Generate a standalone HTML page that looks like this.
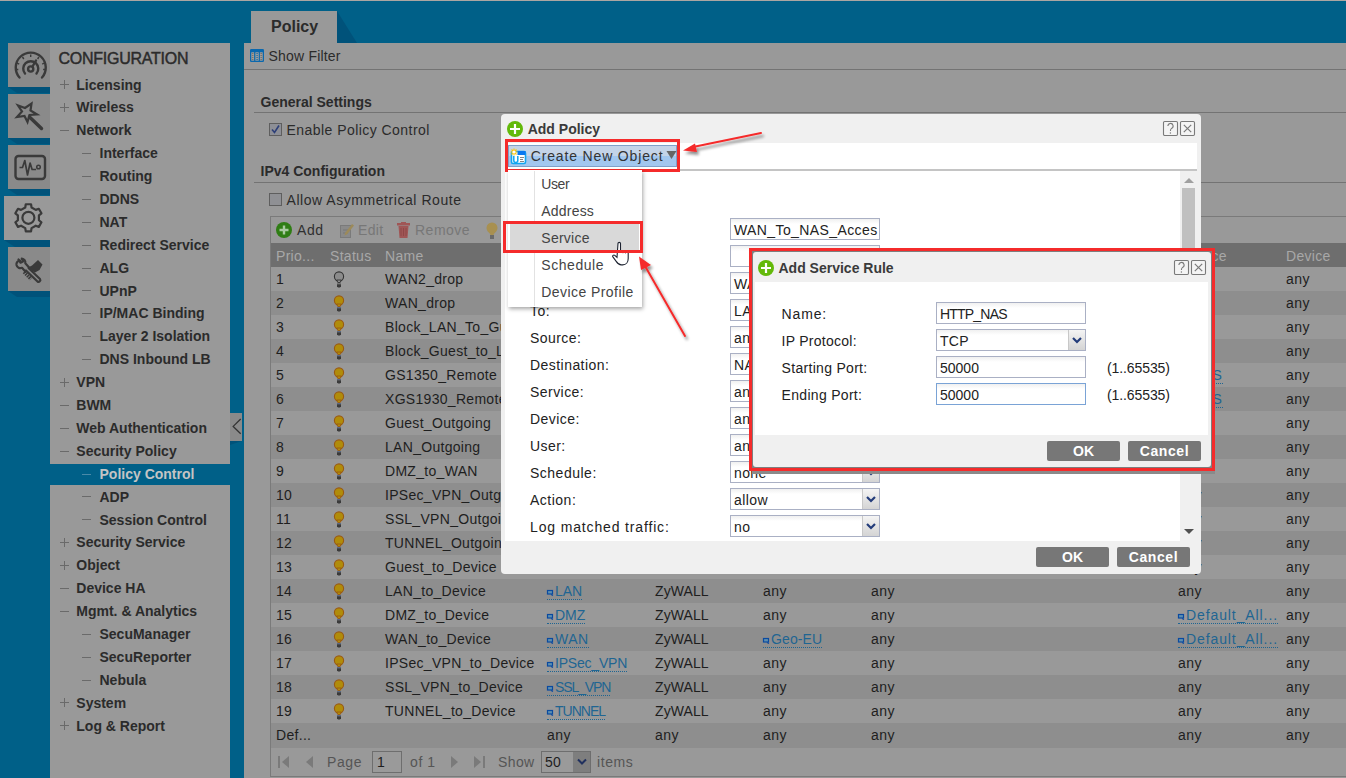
<!DOCTYPE html><html><head><meta charset="utf-8"><style>
*{box-sizing:border-box}
html,body{margin:0;padding:0}
body{width:1346px;height:778px;overflow:hidden;position:relative;background:#006088;font-family:"Liberation Sans",sans-serif;}
.t{position:absolute;white-space:nowrap;line-height:1;}
.r{position:absolute;}
svg{position:absolute;overflow:visible}
</style></head><body>
<div class="r" style="left:0px;top:0px;width:1346px;height:1px;background:#aca6a2;"></div>
<svg style="left:0;top:0" width="1346" height="60"><polygon points="337,11 357,43 337,43" fill="#00527a"/></svg>
<div class="r" style="left:251px;top:11px;width:86px;height:32px;background:#999999;"></div>
<div class="t" style="left:271.0px;top:19.0px;font-size:16px;font-weight:700;color:#2b2b2b;">Policy</div>
<div class="r" style="left:8px;top:43px;width:42px;height:44px;background:#8a8a8a;"></div>
<svg style="left:0;top:0" width="60" height="300"><polygon points="8,87 50,87 50,93 17,93" fill="#00527a"/></svg>
<div class="r" style="left:8px;top:94px;width:42px;height:44px;background:#8a8a8a;"></div>
<svg style="left:0;top:0" width="60" height="300"><polygon points="8,138 50,138 50,144 17,144" fill="#00527a"/></svg>
<div class="r" style="left:8px;top:145px;width:42px;height:44px;background:#8a8a8a;"></div>
<svg style="left:0;top:0" width="60" height="300"><polygon points="8,189 50,189 50,195 17,195" fill="#00527a"/></svg>
<div class="r" style="left:4px;top:196px;width:46px;height:44px;background:#999999;"></div>
<svg style="left:0;top:0" width="60" height="300"><polygon points="4,240 50,240 50,247 15,247" fill="#00527a"/></svg>
<div class="r" style="left:8px;top:247px;width:42px;height:44px;background:#8a8a8a;"></div>
<svg style="left:0;top:0" width="60" height="300"><polygon points="8,291 50,291 50,297 17,297" fill="#00527a"/></svg>
<svg style="left:0;top:0" width="60" height="300"><g fill="none" stroke="#3a3a3a" stroke-width="2.4" stroke-linecap="round"><path d="M19.5 77.5A15 15 0 1 1 42 77.5"/><path d="M25 73.5A7.5 7.5 0 1 1 36.5 73.5"/><circle cx="30.7" cy="69" r="2.6"/><path d="M32.5 66.5L36 60.5"/></g><g stroke="#3a3a3a" stroke-width="1.4"><path d="M30.7 54.5v2.5M22.5 57l1.3 2M38.9 57l-1.3 2M17 63l2.2 1.2M44.4 63l-2.2 1.2M15.8 69.5h2.5M45.6 69.5h-2.5"/></g></svg>
<svg style="left:0;top:0" width="60" height="300"><g fill="none" stroke="#3a3a3a" stroke-width="2.2" stroke-linejoin="miter"><path d="M31.5 103.5L30.5 110.5L37 114.5L29.5 115L27.5 122L24.5 116L17 117L22 111.5L18 105.5L25 108z"/></g><path d="M29.5 117L41.5 128.5" stroke="#3a3a3a" stroke-width="3.4" stroke-linecap="round"/></svg>
<svg style="left:0;top:0" width="60" height="300"><rect x="15.5" y="156" width="29.5" height="23" rx="3" fill="none" stroke="#3a3a3a" stroke-width="2.4"/><path d="M19.5 167.5h3l2.3-7 2.7 14.5 2.6-12 2 6.5h4" fill="none" stroke="#3a3a3a" stroke-width="1.7" stroke-linejoin="round"/><circle cx="38.5" cy="167" r="1.8" fill="none" stroke="#3a3a3a" stroke-width="1.5"/></svg>
<svg style="left:0;top:0" width="60" height="300"><polygon points="25.24,207.47 25.77,204.25 31.03,204.25 31.56,207.47 35.77,209.90 38.81,208.75 41.45,213.31 38.92,215.37 38.92,220.23 41.45,222.29 38.81,226.85 35.77,225.70 31.56,228.13 31.03,231.35 25.77,231.35 25.24,228.13 21.03,225.70 17.99,226.85 15.35,222.29 17.88,220.23 17.88,215.37 15.35,213.31 17.99,208.75 21.03,209.90" fill="none" stroke="#3a3a3a" stroke-width="2.2" stroke-linejoin="round"/><circle cx="28.4" cy="217.8" r="6" fill="none" stroke="#3a3a3a" stroke-width="2.2"/></svg>
<svg style="left:0;top:0" width="60" height="300"><g fill="none" stroke="#3a3a3a" stroke-width="2.2" stroke-linecap="round" stroke-linejoin="round"><path d="M20 260.5a3.8 3.8 0 0 0-3.5 4.5 4 4 0 0 0 5.5 2.8l3.5 4M18.5 259.5l2 3.2 2.5-1.2-1.2-3a4 4 0 0 1 3.5 4.8l4 4.5"/><path d="M29 268.5l11 10.5a1.8 1.8 0 0 1-2.5 2.5l-11.5-11"/></g><path d="M27 268l5-2.5 6-5.5 4.5 4.5-3 5.5-4.5 2.5z" fill="#3a3a3a"/><path d="M24 272l7 7" stroke="#3a3a3a" stroke-width="3.5" stroke-dasharray="1.6 0.8"/></svg>
<div class="r" style="left:50px;top:43px;width:180px;height:735px;background:#999999;"></div>
<div class="t" style="left:58.5px;top:50.8px;font-size:16px;color:#2b2b2b;letter-spacing:-0.25px;-webkit-text-stroke:0.45px #2b2b2b;">CONFIGURATION</div>
<div class="t" style="left:76.3px;top:77.5px;font-size:14px;font-weight:700;color:#2b2b2b;">Licensing</div>
<div class="r" style="left:60px;top:84px;width:9px;height:1px;background:#6a6a6a;"></div>
<div class="r" style="left:64px;top:80px;width:1px;height:9px;background:#6a6a6a;"></div>
<div class="t" style="left:76.3px;top:100.4px;font-size:14px;font-weight:700;color:#2b2b2b;">Wireless</div>
<div class="r" style="left:60px;top:107px;width:9px;height:1px;background:#6a6a6a;"></div>
<div class="r" style="left:64px;top:103px;width:1px;height:9px;background:#6a6a6a;"></div>
<div class="t" style="left:76.3px;top:123.3px;font-size:14px;font-weight:700;color:#2b2b2b;">Network</div>
<div class="r" style="left:60px;top:130px;width:9px;height:1px;background:#6a6a6a;"></div>
<div class="t" style="left:99.5px;top:146.2px;font-size:14px;font-weight:700;color:#2b2b2b;">Interface</div>
<div class="r" style="left:82px;top:153px;width:9px;height:1px;background:#6a6a6a;"></div>
<div class="t" style="left:99.5px;top:169.1px;font-size:14px;font-weight:700;color:#2b2b2b;">Routing</div>
<div class="r" style="left:82px;top:176px;width:9px;height:1px;background:#6a6a6a;"></div>
<div class="t" style="left:99.5px;top:192.0px;font-size:14px;font-weight:700;color:#2b2b2b;">DDNS</div>
<div class="r" style="left:82px;top:199px;width:9px;height:1px;background:#6a6a6a;"></div>
<div class="t" style="left:99.5px;top:214.9px;font-size:14px;font-weight:700;color:#2b2b2b;">NAT</div>
<div class="r" style="left:82px;top:222px;width:9px;height:1px;background:#6a6a6a;"></div>
<div class="t" style="left:99.5px;top:237.8px;font-size:14px;font-weight:700;color:#2b2b2b;">Redirect Service</div>
<div class="r" style="left:82px;top:245px;width:9px;height:1px;background:#6a6a6a;"></div>
<div class="t" style="left:99.5px;top:260.7px;font-size:14px;font-weight:700;color:#2b2b2b;">ALG</div>
<div class="r" style="left:82px;top:268px;width:9px;height:1px;background:#6a6a6a;"></div>
<div class="t" style="left:99.5px;top:283.6px;font-size:14px;font-weight:700;color:#2b2b2b;">UPnP</div>
<div class="r" style="left:82px;top:290px;width:9px;height:1px;background:#6a6a6a;"></div>
<div class="t" style="left:99.5px;top:306.4px;font-size:14px;font-weight:700;color:#2b2b2b;">IP/MAC Binding</div>
<div class="r" style="left:82px;top:313px;width:9px;height:1px;background:#6a6a6a;"></div>
<div class="t" style="left:99.5px;top:329.3px;font-size:14px;font-weight:700;color:#2b2b2b;">Layer 2 Isolation</div>
<div class="r" style="left:82px;top:336px;width:9px;height:1px;background:#6a6a6a;"></div>
<div class="t" style="left:99.5px;top:352.2px;font-size:14px;font-weight:700;color:#2b2b2b;">DNS Inbound LB</div>
<div class="r" style="left:82px;top:359px;width:9px;height:1px;background:#6a6a6a;"></div>
<div class="t" style="left:76.3px;top:375.1px;font-size:14px;font-weight:700;color:#2b2b2b;">VPN</div>
<div class="r" style="left:60px;top:382px;width:9px;height:1px;background:#6a6a6a;"></div>
<div class="r" style="left:64px;top:378px;width:1px;height:9px;background:#6a6a6a;"></div>
<div class="t" style="left:76.3px;top:398.0px;font-size:14px;font-weight:700;color:#2b2b2b;">BWM</div>
<div class="r" style="left:60px;top:405px;width:9px;height:1px;background:#6a6a6a;"></div>
<div class="t" style="left:76.3px;top:420.9px;font-size:14px;font-weight:700;color:#2b2b2b;">Web Authentication</div>
<div class="r" style="left:60px;top:428px;width:9px;height:1px;background:#6a6a6a;"></div>
<div class="t" style="left:76.3px;top:443.8px;font-size:14px;font-weight:700;color:#2b2b2b;">Security Policy</div>
<div class="r" style="left:60px;top:451px;width:9px;height:1px;background:#6a6a6a;"></div>
<div class="r" style="left:50px;top:464px;width:180px;height:21px;background:#006088;"></div>
<div class="t" style="left:99.5px;top:466.7px;font-size:14px;font-weight:700;color:#c4c4c4;">Policy Control</div>
<div class="r" style="left:82px;top:474px;width:9px;height:1px;background:#4a8aa8;"></div>
<div class="t" style="left:99.5px;top:489.6px;font-size:14px;font-weight:700;color:#2b2b2b;">ADP</div>
<div class="r" style="left:82px;top:496px;width:9px;height:1px;background:#6a6a6a;"></div>
<div class="t" style="left:99.5px;top:512.5px;font-size:14px;font-weight:700;color:#2b2b2b;">Session Control</div>
<div class="r" style="left:82px;top:519px;width:9px;height:1px;background:#6a6a6a;"></div>
<div class="t" style="left:76.3px;top:535.3px;font-size:14px;font-weight:700;color:#2b2b2b;">Security Service</div>
<div class="r" style="left:60px;top:542px;width:9px;height:1px;background:#6a6a6a;"></div>
<div class="r" style="left:64px;top:538px;width:1px;height:9px;background:#6a6a6a;"></div>
<div class="t" style="left:76.3px;top:558.2px;font-size:14px;font-weight:700;color:#2b2b2b;">Object</div>
<div class="r" style="left:60px;top:565px;width:9px;height:1px;background:#6a6a6a;"></div>
<div class="r" style="left:64px;top:561px;width:1px;height:9px;background:#6a6a6a;"></div>
<div class="t" style="left:76.3px;top:581.1px;font-size:14px;font-weight:700;color:#2b2b2b;">Device HA</div>
<div class="r" style="left:60px;top:588px;width:9px;height:1px;background:#6a6a6a;"></div>
<div class="t" style="left:76.3px;top:604.0px;font-size:14px;font-weight:700;color:#2b2b2b;">Mgmt. &amp; Analytics</div>
<div class="r" style="left:60px;top:611px;width:9px;height:1px;background:#6a6a6a;"></div>
<div class="t" style="left:99.5px;top:626.9px;font-size:14px;font-weight:700;color:#2b2b2b;">SecuManager</div>
<div class="r" style="left:82px;top:634px;width:9px;height:1px;background:#6a6a6a;"></div>
<div class="t" style="left:99.5px;top:649.8px;font-size:14px;font-weight:700;color:#2b2b2b;">SecuReporter</div>
<div class="r" style="left:82px;top:657px;width:9px;height:1px;background:#6a6a6a;"></div>
<div class="t" style="left:99.5px;top:672.7px;font-size:14px;font-weight:700;color:#2b2b2b;">Nebula</div>
<div class="r" style="left:82px;top:680px;width:9px;height:1px;background:#6a6a6a;"></div>
<div class="t" style="left:76.3px;top:695.6px;font-size:14px;font-weight:700;color:#2b2b2b;">System</div>
<div class="r" style="left:60px;top:702px;width:9px;height:1px;background:#6a6a6a;"></div>
<div class="r" style="left:64px;top:698px;width:1px;height:9px;background:#6a6a6a;"></div>
<div class="t" style="left:76.3px;top:718.5px;font-size:14px;font-weight:700;color:#2b2b2b;">Log &amp; Report</div>
<div class="r" style="left:60px;top:725px;width:9px;height:1px;background:#6a6a6a;"></div>
<div class="r" style="left:64px;top:721px;width:1px;height:9px;background:#6a6a6a;"></div>
<div class="r" style="left:230px;top:413px;width:12px;height:28px;background:#8a8a8a;"></div>
<svg style="left:0;top:0" width="260" height="460"><polygon points="230,441 242,441 230,445" fill="#00527a"/><polyline points="240.7,419 233.2,426.4 240.7,433.7" fill="none" stroke="#333" stroke-width="1.3"/></svg>
<div class="r" style="left:244px;top:43px;width:1102px;height:735px;background:#999999;"></div>
<svg style="left:250px;top:49px" width="15" height="14"><rect x="0" y="0" width="14" height="13" rx="1.2" fill="#0a68ae"/><rect x="1.3" y="3.3" width="2.8" height="8.4" fill="#a8a29c"/><rect x="5.4" y="3.3" width="3.3" height="8.4" fill="#a8a29c"/><rect x="9.9" y="3.3" width="2.8" height="8.4" fill="#a8a29c"/><path d="M6.3 4.6h1.6M6.3 6.6h1.6M6.3 8.6h1.6M6.3 10.6h1.6" stroke="#0a68ae" stroke-width="0.9"/><path d="M1.9 4.6h1.6M1.9 6.6h1.6M1.9 8.6h1.6M1.9 10.6h1.6M10.4 4.6h1.8M10.4 6.6h1.8M10.4 8.6h1.8M10.4 10.6h1.8" stroke="#6e6a66" stroke-width="0.9"/></svg>
<div class="t" style="left:268.5px;top:49.1px;font-size:14px;color:#2b2b2b;letter-spacing:0.2px;">Show Filter</div>
<div class="r" style="left:244px;top:69px;width:1102px;height:1px;background:#737373;"></div>
<div class="t" style="left:260.5px;top:95.1px;font-size:14px;font-weight:700;color:#2b2b2b;">General Settings</div>
<div class="r" style="left:254px;top:112px;width:1092px;height:1px;background:#737373;"></div>
<svg style="left:269px;top:123px" width="13" height="13"><rect x="0.5" y="0.5" width="12" height="12" fill="#8d8f96" stroke="#5e5e5e"/><path d="M3 6.5l2.5 3L10 2.5" fill="none" stroke="#2d3f78" stroke-width="1.6"/></svg>
<div class="t" style="left:286.5px;top:122.6px;font-size:14px;color:#2b2b2b;letter-spacing:0.45px;">Enable Policy Control</div>
<div class="t" style="left:260.5px;top:164.1px;font-size:14px;font-weight:700;color:#2b2b2b;">IPv4 Configuration</div>
<div class="r" style="left:254px;top:182px;width:1092px;height:1px;background:#737373;"></div>
<svg style="left:269px;top:193px" width="13" height="13"><rect x="0.5" y="0.5" width="12" height="12" fill="#8f9094" stroke="#5e5e5e"/></svg>
<div class="t" style="left:286.5px;top:193.1px;font-size:14px;color:#2b2b2b;letter-spacing:0.55px;">Allow Asymmetrical Route</div>
<div class="r" style="left:270px;top:216px;width:1076px;height:561px;background:#999999;border-left:1px solid #7a7a7a;border-top:1px solid #7a7a7a;border-bottom:1px solid #7a7a7a"></div>
<svg style="left:276px;top:222px" width="17" height="17"><circle cx="8" cy="8" r="8" fill="#2f7d14"/><path d="M8 3.5v9M3.5 8h9" stroke="#a9c9a0" stroke-width="2.4"/></svg>
<div class="t" style="left:297.0px;top:222.6px;font-size:14px;color:#2f2f2f;letter-spacing:0.6px;">Add</div>
<svg style="left:340px;top:222px" width="14" height="16"><rect x="0.5" y="3.5" width="10" height="12" fill="#8a8a8a" stroke="#7a7a7a"/><path d="M3 8h5M3 11h5" stroke="#777"/><path d="M5 11l7-9 2 1.5-7 9-2.5 1z" fill="#9c8a5a"/></svg>
<div class="t" style="left:358.0px;top:222.6px;font-size:14px;color:#777777;letter-spacing:0.3px;">Edit</div>
<svg style="left:397px;top:222px" width="13" height="16"><rect x="0" y="1" width="13" height="2.5" fill="#a05656"/><rect x="4" y="0" width="5" height="2" fill="#a05656"/><path d="M1.5 4h10l-1 12h-8z" fill="#a05656"/><path d="M4 6v8M6.5 6v8M9 6v8" stroke="#8a4444" stroke-width="0.8"/></svg>
<div class="t" style="left:415.0px;top:222.6px;font-size:14px;color:#777777;letter-spacing:0.5px;">Remove</div>
<svg style="left:486px;top:222px" width="13" height="19"><circle cx="6" cy="6" r="5.5" fill="#a89050"/><path d="M3 10l1.5 3h3l1.5-3z" fill="#a89050"/><rect x="4" y="13" width="4" height="4" fill="#6a6a6a"/></svg>
<div class="r" style="left:271px;top:243px;width:1075px;height:24px;background:#6e6e6e;"></div>
<div class="t" style="left:276.0px;top:249.1px;font-size:14px;color:#a8a8a8;letter-spacing:0.3px;">Prio...</div>
<div class="t" style="left:330.0px;top:249.1px;font-size:14px;color:#a8a8a8;letter-spacing:0.3px;">Status</div>
<div class="t" style="left:385.0px;top:249.1px;font-size:14px;color:#a8a8a8;letter-spacing:0.3px;">Name</div>
<div class="t" style="left:547.0px;top:249.1px;font-size:14px;color:#a8a8a8;letter-spacing:0.3px;">From</div>
<div class="t" style="left:655.0px;top:249.1px;font-size:14px;color:#a8a8a8;letter-spacing:0.3px;">To</div>
<div class="t" style="left:763.0px;top:249.1px;font-size:14px;color:#a8a8a8;letter-spacing:0.3px;">Source</div>
<div class="t" style="left:871.0px;top:249.1px;font-size:14px;color:#a8a8a8;letter-spacing:0.3px;">Destination</div>
<div class="t" style="left:1178.0px;top:249.1px;font-size:14px;color:#a8a8a8;letter-spacing:0.3px;">Service</div>
<div class="t" style="left:1286.0px;top:249.1px;font-size:14px;color:#a8a8a8;letter-spacing:0.3px;">Device</div>
<div class="r" style="left:271px;top:267px;width:1075px;height:24px;background:#999999;"></div>
<div class="t" style="left:276.0px;top:272.1px;font-size:14px;color:#1e1e1e;letter-spacing:0.3px;">1</div>
<svg style="left:333px;top:271px" width="12" height="17"><circle cx="6" cy="5.5" r="4.6" fill="#8c8c8c" stroke="#333" stroke-width="1.1"/><path d="M3.8 9l1 2.5h2.4l1-2.5z" fill="#8c8c8c" stroke="#333" stroke-width="0.9"/><rect x="4" y="12" width="4" height="1.2" fill="#777"/><path d="M4 13.2h4v2l-1 1.2h-2l-1-1.2z" fill="#3a3a3a"/></svg>
<div class="t" style="left:385.0px;top:272.1px;font-size:14px;color:#1e1e1e;letter-spacing:0.3px;">WAN2_drop</div>
<div class="t" style="left:1178.0px;top:272.1px;font-size:14px;color:#1e1e1e;letter-spacing:0.5px;">any</div>
<div class="t" style="left:1286.0px;top:272.1px;font-size:14px;color:#1e1e1e;letter-spacing:0.5px;">any</div>
<div class="r" style="left:271px;top:291px;width:1075px;height:24px;background:#8e8e8e;"></div>
<div class="t" style="left:276.0px;top:296.1px;font-size:14px;color:#1e1e1e;letter-spacing:0.3px;">2</div>
<svg style="left:333px;top:295px" width="12" height="17"><circle cx="6" cy="5.5" r="4.6" fill="#b08c0a" stroke="#9a5a12" stroke-width="1.1"/><path d="M3.8 9l1 2.5h2.4l1-2.5z" fill="#b08c0a" stroke="#9a5a12" stroke-width="0.9"/><rect x="4" y="12" width="4" height="1.2" fill="#5a6a88"/><path d="M4 13.2h4v2l-1 1.2h-2l-1-1.2z" fill="#3a3a3a"/></svg>
<div class="t" style="left:385.0px;top:296.1px;font-size:14px;color:#1e1e1e;letter-spacing:0.3px;">WAN_drop</div>
<div class="t" style="left:1178.0px;top:296.1px;font-size:14px;color:#1e1e1e;letter-spacing:0.5px;">any</div>
<div class="t" style="left:1286.0px;top:296.1px;font-size:14px;color:#1e1e1e;letter-spacing:0.5px;">any</div>
<div class="r" style="left:271px;top:315px;width:1075px;height:24px;background:#999999;"></div>
<div class="t" style="left:276.0px;top:320.1px;font-size:14px;color:#1e1e1e;letter-spacing:0.3px;">3</div>
<svg style="left:333px;top:319px" width="12" height="17"><circle cx="6" cy="5.5" r="4.6" fill="#b08c0a" stroke="#9a5a12" stroke-width="1.1"/><path d="M3.8 9l1 2.5h2.4l1-2.5z" fill="#b08c0a" stroke="#9a5a12" stroke-width="0.9"/><rect x="4" y="12" width="4" height="1.2" fill="#5a6a88"/><path d="M4 13.2h4v2l-1 1.2h-2l-1-1.2z" fill="#3a3a3a"/></svg>
<div class="t" style="left:385.0px;top:320.1px;font-size:14px;color:#1e1e1e;letter-spacing:0.3px;">Block_LAN_To_Guest</div>
<div class="t" style="left:1178.0px;top:320.1px;font-size:14px;color:#1e1e1e;letter-spacing:0.5px;">any</div>
<div class="t" style="left:1286.0px;top:320.1px;font-size:14px;color:#1e1e1e;letter-spacing:0.5px;">any</div>
<div class="r" style="left:271px;top:339px;width:1075px;height:24px;background:#8e8e8e;"></div>
<div class="t" style="left:276.0px;top:344.1px;font-size:14px;color:#1e1e1e;letter-spacing:0.3px;">4</div>
<svg style="left:333px;top:343px" width="12" height="17"><circle cx="6" cy="5.5" r="4.6" fill="#b08c0a" stroke="#9a5a12" stroke-width="1.1"/><path d="M3.8 9l1 2.5h2.4l1-2.5z" fill="#b08c0a" stroke="#9a5a12" stroke-width="0.9"/><rect x="4" y="12" width="4" height="1.2" fill="#5a6a88"/><path d="M4 13.2h4v2l-1 1.2h-2l-1-1.2z" fill="#3a3a3a"/></svg>
<div class="t" style="left:385.0px;top:344.1px;font-size:14px;color:#1e1e1e;letter-spacing:0.3px;">Block_Guest_to_LAN</div>
<div class="t" style="left:1178.0px;top:344.1px;font-size:14px;color:#1e1e1e;letter-spacing:0.5px;">any</div>
<div class="t" style="left:1286.0px;top:344.1px;font-size:14px;color:#1e1e1e;letter-spacing:0.5px;">any</div>
<div class="r" style="left:271px;top:363px;width:1075px;height:24px;background:#999999;"></div>
<div class="t" style="left:276.0px;top:368.1px;font-size:14px;color:#1e1e1e;letter-spacing:0.3px;">5</div>
<svg style="left:333px;top:367px" width="12" height="17"><circle cx="6" cy="5.5" r="4.6" fill="#b08c0a" stroke="#9a5a12" stroke-width="1.1"/><path d="M3.8 9l1 2.5h2.4l1-2.5z" fill="#b08c0a" stroke="#9a5a12" stroke-width="0.9"/><rect x="4" y="12" width="4" height="1.2" fill="#5a6a88"/><path d="M4 13.2h4v2l-1 1.2h-2l-1-1.2z" fill="#3a3a3a"/></svg>
<div class="t" style="left:385.0px;top:368.1px;font-size:14px;color:#1e1e1e;letter-spacing:0.3px;">GS1350_Remote</div>
<div class="t" style="left:1178.0px;top:368.1px;font-size:14px;color:#1e1e1e;letter-spacing:0.5px;">any</div>
<div class="t" style="left:1286.0px;top:368.1px;font-size:14px;color:#1e1e1e;letter-spacing:0.5px;">any</div>
<div class="r" style="left:271px;top:387px;width:1075px;height:24px;background:#8e8e8e;"></div>
<div class="t" style="left:276.0px;top:392.1px;font-size:14px;color:#1e1e1e;letter-spacing:0.3px;">6</div>
<svg style="left:333px;top:391px" width="12" height="17"><circle cx="6" cy="5.5" r="4.6" fill="#b08c0a" stroke="#9a5a12" stroke-width="1.1"/><path d="M3.8 9l1 2.5h2.4l1-2.5z" fill="#b08c0a" stroke="#9a5a12" stroke-width="0.9"/><rect x="4" y="12" width="4" height="1.2" fill="#5a6a88"/><path d="M4 13.2h4v2l-1 1.2h-2l-1-1.2z" fill="#3a3a3a"/></svg>
<div class="t" style="left:385.0px;top:392.1px;font-size:14px;color:#1e1e1e;letter-spacing:0.3px;">XGS1930_Remote</div>
<div class="t" style="left:1178.0px;top:392.1px;font-size:14px;color:#1e1e1e;letter-spacing:0.5px;">any</div>
<div class="t" style="left:1286.0px;top:392.1px;font-size:14px;color:#1e1e1e;letter-spacing:0.5px;">any</div>
<div class="r" style="left:271px;top:411px;width:1075px;height:24px;background:#999999;"></div>
<div class="t" style="left:276.0px;top:416.1px;font-size:14px;color:#1e1e1e;letter-spacing:0.3px;">7</div>
<svg style="left:333px;top:415px" width="12" height="17"><circle cx="6" cy="5.5" r="4.6" fill="#b08c0a" stroke="#9a5a12" stroke-width="1.1"/><path d="M3.8 9l1 2.5h2.4l1-2.5z" fill="#b08c0a" stroke="#9a5a12" stroke-width="0.9"/><rect x="4" y="12" width="4" height="1.2" fill="#5a6a88"/><path d="M4 13.2h4v2l-1 1.2h-2l-1-1.2z" fill="#3a3a3a"/></svg>
<div class="t" style="left:385.0px;top:416.1px;font-size:14px;color:#1e1e1e;letter-spacing:0.3px;">Guest_Outgoing</div>
<div class="t" style="left:1178.0px;top:416.1px;font-size:14px;color:#1e1e1e;letter-spacing:0.5px;">any</div>
<div class="t" style="left:1286.0px;top:416.1px;font-size:14px;color:#1e1e1e;letter-spacing:0.5px;">any</div>
<div class="r" style="left:271px;top:435px;width:1075px;height:24px;background:#8e8e8e;"></div>
<div class="t" style="left:276.0px;top:440.1px;font-size:14px;color:#1e1e1e;letter-spacing:0.3px;">8</div>
<svg style="left:333px;top:439px" width="12" height="17"><circle cx="6" cy="5.5" r="4.6" fill="#b08c0a" stroke="#9a5a12" stroke-width="1.1"/><path d="M3.8 9l1 2.5h2.4l1-2.5z" fill="#b08c0a" stroke="#9a5a12" stroke-width="0.9"/><rect x="4" y="12" width="4" height="1.2" fill="#5a6a88"/><path d="M4 13.2h4v2l-1 1.2h-2l-1-1.2z" fill="#3a3a3a"/></svg>
<div class="t" style="left:385.0px;top:440.1px;font-size:14px;color:#1e1e1e;letter-spacing:0.3px;">LAN_Outgoing</div>
<div class="t" style="left:1178.0px;top:440.1px;font-size:14px;color:#1e1e1e;letter-spacing:0.5px;">any</div>
<div class="t" style="left:1286.0px;top:440.1px;font-size:14px;color:#1e1e1e;letter-spacing:0.5px;">any</div>
<div class="r" style="left:271px;top:459px;width:1075px;height:24px;background:#999999;"></div>
<div class="t" style="left:276.0px;top:464.1px;font-size:14px;color:#1e1e1e;letter-spacing:0.3px;">9</div>
<svg style="left:333px;top:463px" width="12" height="17"><circle cx="6" cy="5.5" r="4.6" fill="#b08c0a" stroke="#9a5a12" stroke-width="1.1"/><path d="M3.8 9l1 2.5h2.4l1-2.5z" fill="#b08c0a" stroke="#9a5a12" stroke-width="0.9"/><rect x="4" y="12" width="4" height="1.2" fill="#5a6a88"/><path d="M4 13.2h4v2l-1 1.2h-2l-1-1.2z" fill="#3a3a3a"/></svg>
<div class="t" style="left:385.0px;top:464.1px;font-size:14px;color:#1e1e1e;letter-spacing:0.3px;">DMZ_to_WAN</div>
<div class="t" style="left:1178.0px;top:464.1px;font-size:14px;color:#1e1e1e;letter-spacing:0.5px;">any</div>
<div class="t" style="left:1286.0px;top:464.1px;font-size:14px;color:#1e1e1e;letter-spacing:0.5px;">any</div>
<div class="r" style="left:271px;top:483px;width:1075px;height:24px;background:#8e8e8e;"></div>
<div class="t" style="left:276.0px;top:488.1px;font-size:14px;color:#1e1e1e;letter-spacing:0.3px;">10</div>
<svg style="left:333px;top:487px" width="12" height="17"><circle cx="6" cy="5.5" r="4.6" fill="#b08c0a" stroke="#9a5a12" stroke-width="1.1"/><path d="M3.8 9l1 2.5h2.4l1-2.5z" fill="#b08c0a" stroke="#9a5a12" stroke-width="0.9"/><rect x="4" y="12" width="4" height="1.2" fill="#5a6a88"/><path d="M4 13.2h4v2l-1 1.2h-2l-1-1.2z" fill="#3a3a3a"/></svg>
<div class="t" style="left:385.0px;top:488.1px;font-size:14px;color:#1e1e1e;letter-spacing:0.3px;">IPSec_VPN_Outgoing</div>
<div class="t" style="left:1178.0px;top:488.1px;font-size:14px;color:#1e1e1e;letter-spacing:0.5px;">any</div>
<div class="t" style="left:1286.0px;top:488.1px;font-size:14px;color:#1e1e1e;letter-spacing:0.5px;">any</div>
<div class="r" style="left:271px;top:507px;width:1075px;height:24px;background:#999999;"></div>
<div class="t" style="left:276.0px;top:512.1px;font-size:14px;color:#1e1e1e;letter-spacing:0.3px;">11</div>
<svg style="left:333px;top:511px" width="12" height="17"><circle cx="6" cy="5.5" r="4.6" fill="#b08c0a" stroke="#9a5a12" stroke-width="1.1"/><path d="M3.8 9l1 2.5h2.4l1-2.5z" fill="#b08c0a" stroke="#9a5a12" stroke-width="0.9"/><rect x="4" y="12" width="4" height="1.2" fill="#5a6a88"/><path d="M4 13.2h4v2l-1 1.2h-2l-1-1.2z" fill="#3a3a3a"/></svg>
<div class="t" style="left:385.0px;top:512.1px;font-size:14px;color:#1e1e1e;letter-spacing:0.3px;">SSL_VPN_Outgoing</div>
<div class="t" style="left:1178.0px;top:512.1px;font-size:14px;color:#1e1e1e;letter-spacing:0.5px;">any</div>
<div class="t" style="left:1286.0px;top:512.1px;font-size:14px;color:#1e1e1e;letter-spacing:0.5px;">any</div>
<div class="r" style="left:271px;top:531px;width:1075px;height:24px;background:#8e8e8e;"></div>
<div class="t" style="left:276.0px;top:536.1px;font-size:14px;color:#1e1e1e;letter-spacing:0.3px;">12</div>
<svg style="left:333px;top:535px" width="12" height="17"><circle cx="6" cy="5.5" r="4.6" fill="#b08c0a" stroke="#9a5a12" stroke-width="1.1"/><path d="M3.8 9l1 2.5h2.4l1-2.5z" fill="#b08c0a" stroke="#9a5a12" stroke-width="0.9"/><rect x="4" y="12" width="4" height="1.2" fill="#5a6a88"/><path d="M4 13.2h4v2l-1 1.2h-2l-1-1.2z" fill="#3a3a3a"/></svg>
<div class="t" style="left:385.0px;top:536.1px;font-size:14px;color:#1e1e1e;letter-spacing:0.3px;">TUNNEL_Outgoing</div>
<div class="t" style="left:1178.0px;top:536.1px;font-size:14px;color:#1e1e1e;letter-spacing:0.5px;">any</div>
<div class="t" style="left:1286.0px;top:536.1px;font-size:14px;color:#1e1e1e;letter-spacing:0.5px;">any</div>
<div class="r" style="left:271px;top:555px;width:1075px;height:24px;background:#999999;"></div>
<div class="t" style="left:276.0px;top:560.1px;font-size:14px;color:#1e1e1e;letter-spacing:0.3px;">13</div>
<svg style="left:333px;top:559px" width="12" height="17"><circle cx="6" cy="5.5" r="4.6" fill="#b08c0a" stroke="#9a5a12" stroke-width="1.1"/><path d="M3.8 9l1 2.5h2.4l1-2.5z" fill="#b08c0a" stroke="#9a5a12" stroke-width="0.9"/><rect x="4" y="12" width="4" height="1.2" fill="#5a6a88"/><path d="M4 13.2h4v2l-1 1.2h-2l-1-1.2z" fill="#3a3a3a"/></svg>
<div class="t" style="left:385.0px;top:560.1px;font-size:14px;color:#1e1e1e;letter-spacing:0.3px;">Guest_to_Device</div>
<div class="t" style="left:1178.0px;top:560.1px;font-size:14px;color:#1e1e1e;letter-spacing:0.5px;">any</div>
<div class="t" style="left:1286.0px;top:560.1px;font-size:14px;color:#1e1e1e;letter-spacing:0.5px;">any</div>
<div class="r" style="left:271px;top:579px;width:1075px;height:24px;background:#8e8e8e;"></div>
<div class="t" style="left:276.0px;top:584.1px;font-size:14px;color:#1e1e1e;letter-spacing:0.3px;">14</div>
<svg style="left:333px;top:583px" width="12" height="17"><circle cx="6" cy="5.5" r="4.6" fill="#b08c0a" stroke="#9a5a12" stroke-width="1.1"/><path d="M3.8 9l1 2.5h2.4l1-2.5z" fill="#b08c0a" stroke="#9a5a12" stroke-width="0.9"/><rect x="4" y="12" width="4" height="1.2" fill="#5a6a88"/><path d="M4 13.2h4v2l-1 1.2h-2l-1-1.2z" fill="#3a3a3a"/></svg>
<div class="t" style="left:385.0px;top:584.1px;font-size:14px;color:#1e1e1e;letter-spacing:0.3px;">LAN_to_Device</div>
<div class="t" style="left:547px;top:584.1px;font-size:14px;color:#1f6592;letter-spacing:0px;padding-left:8px;padding-bottom:1px;border-bottom:1px dotted #1f6592">LAN</div>
<svg style="left:547px;top:590px" width="7" height="6"><rect x="0.5" y="0.5" width="5" height="3.5" fill="#5d8fb0" stroke="#0a4aa0" stroke-width="1.2"/><path d="M4 4.5l2 1" stroke="#0a4aa0" stroke-width="1.2"/></svg>
<div class="t" style="left:655.0px;top:584.1px;font-size:14px;color:#1e1e1e;letter-spacing:0.1px;">ZyWALL</div>
<div class="t" style="left:763.0px;top:584.1px;font-size:14px;color:#1e1e1e;letter-spacing:0.5px;">any</div>
<div class="t" style="left:871.0px;top:584.1px;font-size:14px;color:#1e1e1e;letter-spacing:0.5px;">any</div>
<div class="t" style="left:1178.0px;top:584.1px;font-size:14px;color:#1e1e1e;letter-spacing:0.5px;">any</div>
<div class="t" style="left:1286.0px;top:584.1px;font-size:14px;color:#1e1e1e;letter-spacing:0.5px;">any</div>
<div class="r" style="left:271px;top:603px;width:1075px;height:24px;background:#999999;"></div>
<div class="t" style="left:276.0px;top:608.1px;font-size:14px;color:#1e1e1e;letter-spacing:0.3px;">15</div>
<svg style="left:333px;top:607px" width="12" height="17"><circle cx="6" cy="5.5" r="4.6" fill="#b08c0a" stroke="#9a5a12" stroke-width="1.1"/><path d="M3.8 9l1 2.5h2.4l1-2.5z" fill="#b08c0a" stroke="#9a5a12" stroke-width="0.9"/><rect x="4" y="12" width="4" height="1.2" fill="#5a6a88"/><path d="M4 13.2h4v2l-1 1.2h-2l-1-1.2z" fill="#3a3a3a"/></svg>
<div class="t" style="left:385.0px;top:608.1px;font-size:14px;color:#1e1e1e;letter-spacing:0.3px;">DMZ_to_Device</div>
<div class="t" style="left:547px;top:608.1px;font-size:14px;color:#1f6592;letter-spacing:0px;padding-left:8px;padding-bottom:1px;border-bottom:1px dotted #1f6592">DMZ</div>
<svg style="left:547px;top:614px" width="7" height="6"><rect x="0.5" y="0.5" width="5" height="3.5" fill="#5d8fb0" stroke="#0a4aa0" stroke-width="1.2"/><path d="M4 4.5l2 1" stroke="#0a4aa0" stroke-width="1.2"/></svg>
<div class="t" style="left:655.0px;top:608.1px;font-size:14px;color:#1e1e1e;letter-spacing:0.1px;">ZyWALL</div>
<div class="t" style="left:763.0px;top:608.1px;font-size:14px;color:#1e1e1e;letter-spacing:0.5px;">any</div>
<div class="t" style="left:871.0px;top:608.1px;font-size:14px;color:#1e1e1e;letter-spacing:0.5px;">any</div>
<div class="t" style="left:1178px;top:608.1px;font-size:14px;color:#1f6592;letter-spacing:0.9px;padding-left:8px;padding-bottom:1px;border-bottom:1px dotted #1f6592">Default_All...</div>
<svg style="left:1178px;top:614px" width="7" height="6"><rect x="0.5" y="0.5" width="5" height="3.5" fill="#5d8fb0" stroke="#0a4aa0" stroke-width="1.2"/><path d="M4 4.5l2 1" stroke="#0a4aa0" stroke-width="1.2"/></svg>
<div class="t" style="left:1286.0px;top:608.1px;font-size:14px;color:#1e1e1e;letter-spacing:0.5px;">any</div>
<div class="r" style="left:271px;top:627px;width:1075px;height:24px;background:#8e8e8e;"></div>
<div class="t" style="left:276.0px;top:632.1px;font-size:14px;color:#1e1e1e;letter-spacing:0.3px;">16</div>
<svg style="left:333px;top:631px" width="12" height="17"><circle cx="6" cy="5.5" r="4.6" fill="#b08c0a" stroke="#9a5a12" stroke-width="1.1"/><path d="M3.8 9l1 2.5h2.4l1-2.5z" fill="#b08c0a" stroke="#9a5a12" stroke-width="0.9"/><rect x="4" y="12" width="4" height="1.2" fill="#5a6a88"/><path d="M4 13.2h4v2l-1 1.2h-2l-1-1.2z" fill="#3a3a3a"/></svg>
<div class="t" style="left:385.0px;top:632.1px;font-size:14px;color:#1e1e1e;letter-spacing:0.3px;">WAN_to_Device</div>
<div class="t" style="left:547px;top:632.1px;font-size:14px;color:#1f6592;letter-spacing:0.5px;padding-left:8px;padding-bottom:1px;border-bottom:1px dotted #1f6592">WAN</div>
<svg style="left:547px;top:638px" width="7" height="6"><rect x="0.5" y="0.5" width="5" height="3.5" fill="#5d8fb0" stroke="#0a4aa0" stroke-width="1.2"/><path d="M4 4.5l2 1" stroke="#0a4aa0" stroke-width="1.2"/></svg>
<div class="t" style="left:655.0px;top:632.1px;font-size:14px;color:#1e1e1e;letter-spacing:0.1px;">ZyWALL</div>
<div class="t" style="left:763px;top:632.1px;font-size:14px;color:#1f6592;letter-spacing:0.1px;padding-left:8px;padding-bottom:1px;border-bottom:1px dotted #1f6592">Geo-EU</div>
<svg style="left:763px;top:638px" width="7" height="6"><rect x="0.5" y="0.5" width="5" height="3.5" fill="#5d8fb0" stroke="#0a4aa0" stroke-width="1.2"/><path d="M4 4.5l2 1" stroke="#0a4aa0" stroke-width="1.2"/></svg>
<div class="t" style="left:871.0px;top:632.1px;font-size:14px;color:#1e1e1e;letter-spacing:0.5px;">any</div>
<div class="t" style="left:1178px;top:632.1px;font-size:14px;color:#1f6592;letter-spacing:0.9px;padding-left:8px;padding-bottom:1px;border-bottom:1px dotted #1f6592">Default_All...</div>
<svg style="left:1178px;top:638px" width="7" height="6"><rect x="0.5" y="0.5" width="5" height="3.5" fill="#5d8fb0" stroke="#0a4aa0" stroke-width="1.2"/><path d="M4 4.5l2 1" stroke="#0a4aa0" stroke-width="1.2"/></svg>
<div class="t" style="left:1286.0px;top:632.1px;font-size:14px;color:#1e1e1e;letter-spacing:0.5px;">any</div>
<div class="r" style="left:271px;top:651px;width:1075px;height:24px;background:#999999;"></div>
<div class="t" style="left:276.0px;top:656.1px;font-size:14px;color:#1e1e1e;letter-spacing:0.3px;">17</div>
<svg style="left:333px;top:655px" width="12" height="17"><circle cx="6" cy="5.5" r="4.6" fill="#b08c0a" stroke="#9a5a12" stroke-width="1.1"/><path d="M3.8 9l1 2.5h2.4l1-2.5z" fill="#b08c0a" stroke="#9a5a12" stroke-width="0.9"/><rect x="4" y="12" width="4" height="1.2" fill="#5a6a88"/><path d="M4 13.2h4v2l-1 1.2h-2l-1-1.2z" fill="#3a3a3a"/></svg>
<div class="t" style="left:385.0px;top:656.1px;font-size:14px;color:#1e1e1e;letter-spacing:0.3px;">IPSec_VPN_to_Device</div>
<div class="t" style="left:547px;top:656.1px;font-size:14px;color:#1f6592;letter-spacing:-0.2px;padding-left:8px;padding-bottom:1px;border-bottom:1px dotted #1f6592">IPSec_VPN</div>
<svg style="left:547px;top:662px" width="7" height="6"><rect x="0.5" y="0.5" width="5" height="3.5" fill="#5d8fb0" stroke="#0a4aa0" stroke-width="1.2"/><path d="M4 4.5l2 1" stroke="#0a4aa0" stroke-width="1.2"/></svg>
<div class="t" style="left:655.0px;top:656.1px;font-size:14px;color:#1e1e1e;letter-spacing:0.1px;">ZyWALL</div>
<div class="t" style="left:763.0px;top:656.1px;font-size:14px;color:#1e1e1e;letter-spacing:0.5px;">any</div>
<div class="t" style="left:871.0px;top:656.1px;font-size:14px;color:#1e1e1e;letter-spacing:0.5px;">any</div>
<div class="t" style="left:1178.0px;top:656.1px;font-size:14px;color:#1e1e1e;letter-spacing:0.5px;">any</div>
<div class="t" style="left:1286.0px;top:656.1px;font-size:14px;color:#1e1e1e;letter-spacing:0.5px;">any</div>
<div class="r" style="left:271px;top:675px;width:1075px;height:24px;background:#8e8e8e;"></div>
<div class="t" style="left:276.0px;top:680.1px;font-size:14px;color:#1e1e1e;letter-spacing:0.3px;">18</div>
<svg style="left:333px;top:679px" width="12" height="17"><circle cx="6" cy="5.5" r="4.6" fill="#b08c0a" stroke="#9a5a12" stroke-width="1.1"/><path d="M3.8 9l1 2.5h2.4l1-2.5z" fill="#b08c0a" stroke="#9a5a12" stroke-width="0.9"/><rect x="4" y="12" width="4" height="1.2" fill="#5a6a88"/><path d="M4 13.2h4v2l-1 1.2h-2l-1-1.2z" fill="#3a3a3a"/></svg>
<div class="t" style="left:385.0px;top:680.1px;font-size:14px;color:#1e1e1e;letter-spacing:0.3px;">SSL_VPN_to_Device</div>
<div class="t" style="left:547px;top:680.1px;font-size:14px;color:#1f6592;letter-spacing:-1.1px;padding-left:8px;padding-bottom:1px;border-bottom:1px dotted #1f6592">SSL_VPN</div>
<svg style="left:547px;top:686px" width="7" height="6"><rect x="0.5" y="0.5" width="5" height="3.5" fill="#5d8fb0" stroke="#0a4aa0" stroke-width="1.2"/><path d="M4 4.5l2 1" stroke="#0a4aa0" stroke-width="1.2"/></svg>
<div class="t" style="left:655.0px;top:680.1px;font-size:14px;color:#1e1e1e;letter-spacing:0.1px;">ZyWALL</div>
<div class="t" style="left:763.0px;top:680.1px;font-size:14px;color:#1e1e1e;letter-spacing:0.5px;">any</div>
<div class="t" style="left:871.0px;top:680.1px;font-size:14px;color:#1e1e1e;letter-spacing:0.5px;">any</div>
<div class="t" style="left:1178.0px;top:680.1px;font-size:14px;color:#1e1e1e;letter-spacing:0.5px;">any</div>
<div class="t" style="left:1286.0px;top:680.1px;font-size:14px;color:#1e1e1e;letter-spacing:0.5px;">any</div>
<div class="r" style="left:271px;top:699px;width:1075px;height:24px;background:#999999;"></div>
<div class="t" style="left:276.0px;top:704.1px;font-size:14px;color:#1e1e1e;letter-spacing:0.3px;">19</div>
<svg style="left:333px;top:703px" width="12" height="17"><circle cx="6" cy="5.5" r="4.6" fill="#b08c0a" stroke="#9a5a12" stroke-width="1.1"/><path d="M3.8 9l1 2.5h2.4l1-2.5z" fill="#b08c0a" stroke="#9a5a12" stroke-width="0.9"/><rect x="4" y="12" width="4" height="1.2" fill="#5a6a88"/><path d="M4 13.2h4v2l-1 1.2h-2l-1-1.2z" fill="#3a3a3a"/></svg>
<div class="t" style="left:385.0px;top:704.1px;font-size:14px;color:#1e1e1e;letter-spacing:0.3px;">TUNNEL_to_Device</div>
<div class="t" style="left:547px;top:704.1px;font-size:14px;color:#1f6592;letter-spacing:-1.0px;padding-left:8px;padding-bottom:1px;border-bottom:1px dotted #1f6592">TUNNEL</div>
<svg style="left:547px;top:710px" width="7" height="6"><rect x="0.5" y="0.5" width="5" height="3.5" fill="#5d8fb0" stroke="#0a4aa0" stroke-width="1.2"/><path d="M4 4.5l2 1" stroke="#0a4aa0" stroke-width="1.2"/></svg>
<div class="t" style="left:655.0px;top:704.1px;font-size:14px;color:#1e1e1e;letter-spacing:0.1px;">ZyWALL</div>
<div class="t" style="left:763.0px;top:704.1px;font-size:14px;color:#1e1e1e;letter-spacing:0.5px;">any</div>
<div class="t" style="left:871.0px;top:704.1px;font-size:14px;color:#1e1e1e;letter-spacing:0.5px;">any</div>
<div class="t" style="left:1178.0px;top:704.1px;font-size:14px;color:#1e1e1e;letter-spacing:0.5px;">any</div>
<div class="t" style="left:1286.0px;top:704.1px;font-size:14px;color:#1e1e1e;letter-spacing:0.5px;">any</div>
<div class="t" style="left:1176.0px;top:368.1px;font-size:14px;color:#1f6592;">HTTPS</div>
<div class="r" style="left:1178px;top:383px;width:45px;height:0;border-top:1px dotted #1f6592"></div>
<div class="t" style="left:1176.0px;top:392.1px;font-size:14px;color:#1f6592;">HTTPS</div>
<div class="r" style="left:1178px;top:407px;width:45px;height:0;border-top:1px dotted #1f6592"></div>
<div class="r" style="left:271px;top:723px;width:1075px;height:25px;background:#8e8e8e;"></div>
<div class="t" style="left:276.0px;top:728.1px;font-size:14px;color:#1e1e1e;letter-spacing:0.3px;">Def...</div>
<div class="t" style="left:547.0px;top:728.1px;font-size:14px;color:#1e1e1e;letter-spacing:0.5px;">any</div>
<div class="t" style="left:655.0px;top:728.1px;font-size:14px;color:#1e1e1e;letter-spacing:0.5px;">any</div>
<div class="t" style="left:763.0px;top:728.1px;font-size:14px;color:#1e1e1e;letter-spacing:0.5px;">any</div>
<div class="t" style="left:871.0px;top:728.1px;font-size:14px;color:#1e1e1e;letter-spacing:0.5px;">any</div>
<div class="t" style="left:1178.0px;top:728.1px;font-size:14px;color:#1e1e1e;letter-spacing:0.5px;">any</div>
<div class="t" style="left:1286.0px;top:728.1px;font-size:14px;color:#1e1e1e;letter-spacing:0.5px;">any</div>
<div class="r" style="left:271px;top:748px;width:1075px;height:28px;background:#999999;"></div>
<svg style="left:276px;top:754px" width="220" height="16"><path d="M3 2v12" stroke="#7a7a7a" stroke-width="2"/><path d="M13 2l-7 6 7 6z" fill="#7a7a7a"/><path d="M37 2l-7 6 7 6z" fill="#7a7a7a"/><path d="M175 2l7 6-7 6z" fill="#7a7a7a"/><path d="M198 2l7 6-7 6z" fill="#7a7a7a"/><path d="M208 2v12" stroke="#7a7a7a" stroke-width="2"/></svg>
<div class="t" style="left:327.0px;top:755.1px;font-size:14px;color:#555555;letter-spacing:0.6px;">Page</div>
<div class="r" style="left:372px;top:751px;width:30px;height:22px;background:#9a9a9a;border:1px solid #6e6e6e"></div>
<div class="t" style="left:377.0px;top:755.1px;font-size:14px;color:#1e1e1e;">1</div>
<div class="t" style="left:410.0px;top:755.1px;font-size:14px;color:#555555;letter-spacing:0.6px;">of 1</div>
<div class="t" style="left:498.0px;top:755.1px;font-size:14px;color:#555555;letter-spacing:0.4px;">Show</div>
<div class="r" style="left:541px;top:751px;width:50px;height:22px;background:#9a9a9a;border:1px solid #6e6e6e"></div>
<div class="r" style="left:573px;top:752px;width:17px;height:20px;background:#7e7e7e;"></div>
<svg style="left:577px;top:758px" width="10" height="8"><path d="M1 1.5l4 4 4-4" fill="none" stroke="#20305e" stroke-width="2"/></svg>
<div class="t" style="left:545.0px;top:755.1px;font-size:14px;color:#1e1e1e;letter-spacing:0.3px;">50</div>
<div class="t" style="left:597.0px;top:755.1px;font-size:14px;color:#555555;letter-spacing:0.6px;">items</div>
<div class="r" style="left:501px;top:114px;width:700px;height:460px;background:#f0f0f0;border-radius:4px"></div>
<svg style="left:507px;top:121px" width="16" height="16"><circle cx="8" cy="8" r="8" fill="#63b90a"/><path d="M8 3v10M3 8h10" stroke="#fff" stroke-width="2.2"/></svg>
<div class="t" style="left:527.7px;top:121.9px;font-size:14px;font-weight:700;color:#3a3a3a;">Add Policy</div>
<svg style="left:1163px;top:121px" width="33" height="16"><rect x="0.5" y="0.5" width="14" height="14" rx="1.2" fill="#f4f4f4" stroke="#7a7a7a" stroke-width="1.1"/><path d="M4.9 5a2.6 2.6 0 1 1 3.6 2.4c-0.8 0.5-1 1.2-1.1 2.6" fill="none" stroke="#7a7a7a" stroke-width="1.1"/><circle cx="7.4" cy="12" r="0.7" fill="#7a7a7a"/><rect x="17.5" y="0.5" width="14" height="14" rx="1.2" fill="#f4f4f4" stroke="#7a7a7a" stroke-width="1.1"/><path d="M20.8 3.8l7.4 7.4M28.2 3.8l-7.4 7.4" stroke="#7a7a7a" stroke-width="1.2"/></svg>
<div class="r" style="left:505px;top:143px;width:692px;height:26px;background:#ffffff;"></div>
<div class="r" style="left:505px;top:169px;width:692px;height:2px;background:#c4c4c4;"></div>
<div class="r" style="left:505px;top:171px;width:675px;height:370px;background:#ffffff;"></div>
<div class="r" style="left:1180px;top:171px;width:17px;height:370px;background:#f0f0f0;"></div>
<svg style="left:1183px;top:176px" width="12" height="8"><path d="M1 7l5-5 5 5z" fill="#a0a0a0"/></svg>
<div class="r" style="left:1182px;top:188px;width:13px;height:200px;background:#c0c0c0;"></div>
<svg style="left:1183px;top:528px" width="12" height="8"><path d="M1 1l5 5 5-5z" fill="#505050"/></svg>
<div class="t" style="left:530.0px;top:223.1px;font-size:14px;color:#222;letter-spacing:0.5px;">Name:</div>
<div class="r" style="left:730px;top:218px;width:150px;height:22px;background:linear-gradient(#f0f0f0,#fff 5px);border:1px solid #aab0c4;overflow:hidden"></div>
<div class="t" style="left:734.0px;top:222.6px;font-size:14px;color:#222;letter-spacing:0.4px;">WAN_To_NAS_Acces</div>
<div class="t" style="left:530.0px;top:250.1px;font-size:14px;color:#222;letter-spacing:0.5px;">Description:</div>
<div class="r" style="left:730px;top:245px;width:150px;height:22px;background:linear-gradient(#f0f0f0,#fff 5px);border:1px solid #aab0c4;overflow:hidden"></div>
<div class="t" style="left:530.0px;top:277.1px;font-size:14px;color:#222;letter-spacing:0.5px;">From:</div>
<div class="r" style="left:730px;top:272px;width:150px;height:22px;background:linear-gradient(#f0f0f0,#fff 5px);border:1px solid #aab0c4;overflow:hidden"></div>
<div class="r" style="left:862px;top:273px;width:17px;height:20px;background:linear-gradient(#f4f4f4,#d4d4d4);border-left:1px solid #c8c8c8"></div>
<svg style="left:866px;top:280px" width="10" height="7"><path d="M1 1l4 4 4-4" fill="none" stroke="#233c7a" stroke-width="2.2"/></svg>
<div class="t" style="left:734.0px;top:276.6px;font-size:14px;color:#222;letter-spacing:0.4px;">WAN</div>
<div class="t" style="left:530.0px;top:304.1px;font-size:14px;color:#222;letter-spacing:0.5px;">To:</div>
<div class="r" style="left:730px;top:299px;width:150px;height:22px;background:linear-gradient(#f0f0f0,#fff 5px);border:1px solid #aab0c4;overflow:hidden"></div>
<div class="r" style="left:862px;top:300px;width:17px;height:20px;background:linear-gradient(#f4f4f4,#d4d4d4);border-left:1px solid #c8c8c8"></div>
<svg style="left:866px;top:307px" width="10" height="7"><path d="M1 1l4 4 4-4" fill="none" stroke="#233c7a" stroke-width="2.2"/></svg>
<div class="t" style="left:734.0px;top:303.6px;font-size:14px;color:#222;letter-spacing:0.4px;">LAN</div>
<div class="t" style="left:530.0px;top:331.1px;font-size:14px;color:#222;letter-spacing:0.45px;">Source:</div>
<div class="r" style="left:730px;top:326px;width:150px;height:22px;background:linear-gradient(#f0f0f0,#fff 5px);border:1px solid #aab0c4;overflow:hidden"></div>
<div class="r" style="left:862px;top:327px;width:17px;height:20px;background:linear-gradient(#f4f4f4,#d4d4d4);border-left:1px solid #c8c8c8"></div>
<svg style="left:866px;top:334px" width="10" height="7"><path d="M1 1l4 4 4-4" fill="none" stroke="#233c7a" stroke-width="2.2"/></svg>
<div class="t" style="left:734.0px;top:330.6px;font-size:14px;color:#222;letter-spacing:0.4px;">any</div>
<div class="t" style="left:530.0px;top:358.1px;font-size:14px;color:#222;letter-spacing:0.45px;">Destination:</div>
<div class="r" style="left:730px;top:353px;width:150px;height:22px;background:linear-gradient(#f0f0f0,#fff 5px);border:1px solid #aab0c4;overflow:hidden"></div>
<div class="r" style="left:862px;top:354px;width:17px;height:20px;background:linear-gradient(#f4f4f4,#d4d4d4);border-left:1px solid #c8c8c8"></div>
<svg style="left:866px;top:361px" width="10" height="7"><path d="M1 1l4 4 4-4" fill="none" stroke="#233c7a" stroke-width="2.2"/></svg>
<div class="t" style="left:734.0px;top:357.6px;font-size:14px;color:#222;letter-spacing:0.4px;">NAS</div>
<div class="t" style="left:530.0px;top:385.1px;font-size:14px;color:#222;letter-spacing:0.45px;">Service:</div>
<div class="r" style="left:730px;top:380px;width:150px;height:22px;background:linear-gradient(#f0f0f0,#fff 5px);border:1px solid #aab0c4;overflow:hidden"></div>
<div class="r" style="left:862px;top:381px;width:17px;height:20px;background:linear-gradient(#f4f4f4,#d4d4d4);border-left:1px solid #c8c8c8"></div>
<svg style="left:866px;top:388px" width="10" height="7"><path d="M1 1l4 4 4-4" fill="none" stroke="#233c7a" stroke-width="2.2"/></svg>
<div class="t" style="left:734.0px;top:384.6px;font-size:14px;color:#222;letter-spacing:0.4px;">any</div>
<div class="t" style="left:530.0px;top:412.1px;font-size:14px;color:#222;letter-spacing:0.45px;">Device:</div>
<div class="r" style="left:730px;top:407px;width:150px;height:22px;background:linear-gradient(#f0f0f0,#fff 5px);border:1px solid #aab0c4;overflow:hidden"></div>
<div class="r" style="left:862px;top:408px;width:17px;height:20px;background:linear-gradient(#f4f4f4,#d4d4d4);border-left:1px solid #c8c8c8"></div>
<svg style="left:866px;top:415px" width="10" height="7"><path d="M1 1l4 4 4-4" fill="none" stroke="#233c7a" stroke-width="2.2"/></svg>
<div class="t" style="left:734.0px;top:411.6px;font-size:14px;color:#222;letter-spacing:0.4px;">any</div>
<div class="t" style="left:530.0px;top:439.1px;font-size:14px;color:#222;letter-spacing:0.45px;">User:</div>
<div class="r" style="left:730px;top:434px;width:150px;height:22px;background:linear-gradient(#f0f0f0,#fff 5px);border:1px solid #aab0c4;overflow:hidden"></div>
<div class="r" style="left:862px;top:435px;width:17px;height:20px;background:linear-gradient(#f4f4f4,#d4d4d4);border-left:1px solid #c8c8c8"></div>
<svg style="left:866px;top:442px" width="10" height="7"><path d="M1 1l4 4 4-4" fill="none" stroke="#233c7a" stroke-width="2.2"/></svg>
<div class="t" style="left:734.0px;top:438.6px;font-size:14px;color:#222;letter-spacing:0.4px;">any</div>
<div class="t" style="left:530.0px;top:466.1px;font-size:14px;color:#222;letter-spacing:0.5px;">Schedule:</div>
<div class="r" style="left:730px;top:461px;width:150px;height:22px;background:linear-gradient(#f0f0f0,#fff 5px);border:1px solid #aab0c4;overflow:hidden"></div>
<div class="r" style="left:862px;top:462px;width:17px;height:20px;background:linear-gradient(#f4f4f4,#d4d4d4);border-left:1px solid #c8c8c8"></div>
<svg style="left:866px;top:469px" width="10" height="7"><path d="M1 1l4 4 4-4" fill="none" stroke="#233c7a" stroke-width="2.2"/></svg>
<div class="t" style="left:734.0px;top:465.6px;font-size:14px;color:#222;letter-spacing:0.4px;">none</div>
<div class="t" style="left:530.0px;top:493.1px;font-size:14px;color:#222;letter-spacing:0.5px;">Action:</div>
<div class="r" style="left:730px;top:488px;width:150px;height:22px;background:linear-gradient(#f0f0f0,#fff 5px);border:1px solid #aab0c4;overflow:hidden"></div>
<div class="r" style="left:862px;top:489px;width:17px;height:20px;background:linear-gradient(#f4f4f4,#d4d4d4);border-left:1px solid #c8c8c8"></div>
<svg style="left:866px;top:496px" width="10" height="7"><path d="M1 1l4 4 4-4" fill="none" stroke="#233c7a" stroke-width="2.2"/></svg>
<div class="t" style="left:734.0px;top:492.6px;font-size:14px;color:#222;letter-spacing:0.4px;">allow</div>
<div class="t" style="left:530.0px;top:520.1px;font-size:14px;color:#222;letter-spacing:0.85px;">Log matched traffic:</div>
<div class="r" style="left:730px;top:515px;width:150px;height:22px;background:linear-gradient(#f0f0f0,#fff 5px);border:1px solid #aab0c4;overflow:hidden"></div>
<div class="r" style="left:862px;top:516px;width:17px;height:20px;background:linear-gradient(#f4f4f4,#d4d4d4);border-left:1px solid #c8c8c8"></div>
<svg style="left:866px;top:523px" width="10" height="7"><path d="M1 1l4 4 4-4" fill="none" stroke="#233c7a" stroke-width="2.2"/></svg>
<div class="t" style="left:734.0px;top:519.6px;font-size:14px;color:#222;letter-spacing:0.4px;">no</div>
<div class="r" style="left:1036px;top:547px;width:73px;height:20px;background:#777777;border-radius:2px"></div>
<div class="t" style="left:1036px;top:550.0px;width:73px;text-align:center;font-size:14px;font-weight:700;color:#fff;letter-spacing:0px">OK</div>
<div class="r" style="left:1117px;top:547px;width:73px;height:20px;background:#777777;border-radius:2px"></div>
<div class="t" style="left:1117px;top:550.0px;width:73px;text-align:center;font-size:14px;font-weight:700;color:#fff;letter-spacing:0.6px">Cancel</div>
<div class="r" style="left:508px;top:145px;width:169px;height:22px;background:linear-gradient(#c4d4e8 0,#c4d4e8 50%,#a2c7ef 50%,#a2c7ef 100%);border:1px solid #7fa0c8"></div>
<svg style="left:510px;top:148px" width="17" height="17"><rect x="1.5" y="3.5" width="14" height="12" rx="1.5" fill="#fff" stroke="#12a6f0" stroke-width="1.6"/><rect x="7.5" y="3" width="8" height="4" fill="#0a78f0"/><path d="M3.8 8v4.5a2 2 0 0 0 4 0V8" fill="none" stroke="#12a6f0" stroke-width="1.5"/><path d="M10 9.5h4M10 11.5h3M10 13.5h4" stroke="#777" stroke-width="0.9"/><path d="M4 0.5v7M0.5 4h7M1.5 1.5l5 5M6.5 1.5l-5 5" stroke="#ffc400" stroke-width="1.1"/><circle cx="4" cy="4" r="1.6" fill="#fff"/></svg>
<div class="t" style="left:530.7px;top:148.6px;font-size:14px;color:#333;letter-spacing:0.85px;">Create New Object</div>
<svg style="left:666px;top:150px" width="11" height="10"><path d="M0.5 1h10l-5 8z" fill="#666"/></svg>
<div class="r" style="left:505px;top:139px;width:175px;height:33px;border:3px solid #f52b2b"></div>
<div class="r" style="left:508px;top:170px;width:134px;height:137px;background:#fff;box-shadow:1px 2px 4px rgba(0,0,0,0.35)"></div>
<div class="r" style="left:534px;top:171px;width:1px;height:135px;background:#e2e2e2;"></div>
<div class="r" style="left:510px;top:224px;width:129px;height:26px;background:#d9d9d9;"></div>
<div class="t" style="left:541.3px;top:177.1px;font-size:14px;color:#444;letter-spacing:-0.4px;">User</div>
<div class="t" style="left:541.3px;top:204.1px;font-size:14px;color:#444;letter-spacing:0.2px;">Address</div>
<div class="t" style="left:541.3px;top:231.1px;font-size:14px;color:#444;letter-spacing:0.25px;">Service</div>
<div class="t" style="left:541.3px;top:258.1px;font-size:14px;color:#444;letter-spacing:0.55px;">Schedule</div>
<div class="t" style="left:541.3px;top:285.1px;font-size:14px;color:#444;letter-spacing:0.43px;">Device Profile</div>
<svg style="left:612px;top:241px" width="22" height="28"><path d="M6 2.5c0-1.5 2.5-1.5 2.5 0v8c0.5-1.2 2.5-1.2 2.7 0.2 0.5-1.2 2.5-1 2.6 0.4 0.6-1 2.4-0.7 2.4 0.8v5.5c0 3.5-2 6.5-5.5 6.5h-1.5c-2.5 0-3.5-1.3-5-3.5l-3.3-4.5c-0.8-1.2 0.8-2.5 1.9-1.5l2.2 2z" fill="#fff" stroke="#1c2230" stroke-width="1.1"/></svg>
<div class="r" style="left:503px;top:221px;width:140px;height:32px;border:3px solid #f52b2b"></div>
<div class="r" style="left:752px;top:471px;width:463px;height:3px;background:#8a8a8a;"></div>
<div class="r" style="left:749px;top:248px;width:466px;height:223px;background:#f52b2b;"></div>
<div class="r" style="left:752px;top:251px;width:460px;height:217px;background:#7e7e7e;"></div>
<div class="r" style="left:753px;top:252px;width:458px;height:215px;background:#f0f0f0;border-radius:3px"></div>
<svg style="left:758px;top:260px" width="16" height="16"><circle cx="8" cy="8" r="8" fill="#63b90a"/><path d="M8 3v10M3 8h10" stroke="#fff" stroke-width="2.2"/></svg>
<div class="t" style="left:778.5px;top:260.8px;font-size:14px;font-weight:700;color:#3a3a3a;">Add Service Rule</div>
<svg style="left:1174px;top:260px" width="33" height="16"><rect x="0.5" y="0.5" width="14" height="14" rx="1.2" fill="#f4f4f4" stroke="#7a7a7a" stroke-width="1.1"/><path d="M4.9 5a2.6 2.6 0 1 1 3.6 2.4c-0.8 0.5-1 1.2-1.1 2.6" fill="none" stroke="#7a7a7a" stroke-width="1.1"/><circle cx="7.4" cy="12" r="0.7" fill="#7a7a7a"/><rect x="17.5" y="0.5" width="14" height="14" rx="1.2" fill="#f4f4f4" stroke="#7a7a7a" stroke-width="1.1"/><path d="M20.8 3.8l7.4 7.4M28.2 3.8l-7.4 7.4" stroke="#7a7a7a" stroke-width="1.2"/></svg>
<div class="r" style="left:755px;top:282px;width:453px;height:153px;background:#ffffff;"></div>
<div class="t" style="left:781.6px;top:307.1px;font-size:14px;color:#222;letter-spacing:0.85px;">Name:</div>
<div class="t" style="left:781.6px;top:334.1px;font-size:14px;color:#222;letter-spacing:0.26px;">IP Protocol:</div>
<div class="t" style="left:781.6px;top:361.1px;font-size:14px;color:#222;letter-spacing:0.3px;">Starting Port:</div>
<div class="t" style="left:781.6px;top:388.1px;font-size:14px;color:#222;letter-spacing:0.3px;">Ending Port:</div>
<div class="r" style="left:936px;top:302px;width:150px;height:22px;background:linear-gradient(#f0f0f0,#fff 5px);border:1px solid #aab0c4;overflow:hidden"></div>
<div class="t" style="left:940.0px;top:306.6px;font-size:14px;color:#222;letter-spacing:-0.8px;">HTTP_NAS</div>
<div class="r" style="left:936px;top:329px;width:150px;height:22px;background:linear-gradient(#f0f0f0,#fff 5px);border:1px solid #aab0c4;overflow:hidden"></div>
<div class="r" style="left:1068px;top:330px;width:17px;height:20px;background:linear-gradient(#f4f4f4,#d4d4d4);border-left:1px solid #c8c8c8"></div>
<svg style="left:1072px;top:337px" width="10" height="7"><path d="M1 1l4 4 4-4" fill="none" stroke="#233c7a" stroke-width="2.2"/></svg>
<div class="t" style="left:940.0px;top:333.6px;font-size:14px;color:#222;letter-spacing:0.3px;">TCP</div>
<div class="r" style="left:936px;top:356px;width:150px;height:22px;background:linear-gradient(#f0f0f0,#fff 5px);border:1px solid #aab0c4;overflow:hidden"></div>
<div class="t" style="left:940.0px;top:360.6px;font-size:14px;color:#222;">50000</div>
<div class="r" style="left:936px;top:383px;width:150px;height:22px;background:linear-gradient(#f0f0f0,#fff 5px);border:1px solid #7aa3d6;overflow:hidden"></div>
<div class="t" style="left:940.0px;top:387.6px;font-size:14px;color:#222;">50000</div>
<div class="t" style="left:1107.0px;top:361.1px;font-size:14px;color:#222;letter-spacing:-0.1px;">(1..65535)</div>
<div class="t" style="left:1107.0px;top:388.1px;font-size:14px;color:#222;letter-spacing:-0.1px;">(1..65535)</div>
<div class="r" style="left:1047px;top:441px;width:73px;height:20px;background:#777777;border-radius:2px"></div>
<div class="t" style="left:1047px;top:444.0px;width:73px;text-align:center;font-size:14px;font-weight:700;color:#fff;letter-spacing:0px">OK</div>
<div class="r" style="left:1128px;top:441px;width:73px;height:20px;background:#777777;border-radius:2px"></div>
<div class="t" style="left:1128px;top:444.0px;width:73px;text-align:center;font-size:14px;font-weight:700;color:#fff;letter-spacing:0.6px">Cancel</div>
<svg style="left:0;top:0" width="1346" height="778"><defs><filter id="sh" x="-20%" y="-20%" width="140%" height="140%"><feGaussianBlur in="SourceAlpha" stdDeviation="1.5"/><feOffset dx="2" dy="3"/><feComponentTransfer><feFuncA type="linear" slope="0.45"/></feComponentTransfer><feMerge><feMergeNode/><feMergeNode in="SourceGraphic"/></feMerge></filter></defs><g filter="url(#sh)" fill="#f52b2b"><path d="M761 133L693 147" stroke="#f52b2b" stroke-width="2.0" stroke-linecap="round"/><path d="M683 150.5L695 143.5L697 152z"/><path d="M685 336L645 266" stroke="#f52b2b" stroke-width="2.0" stroke-linecap="round"/><path d="M639 256.5L651 265L641 270z"/></g></svg>
</body></html>
